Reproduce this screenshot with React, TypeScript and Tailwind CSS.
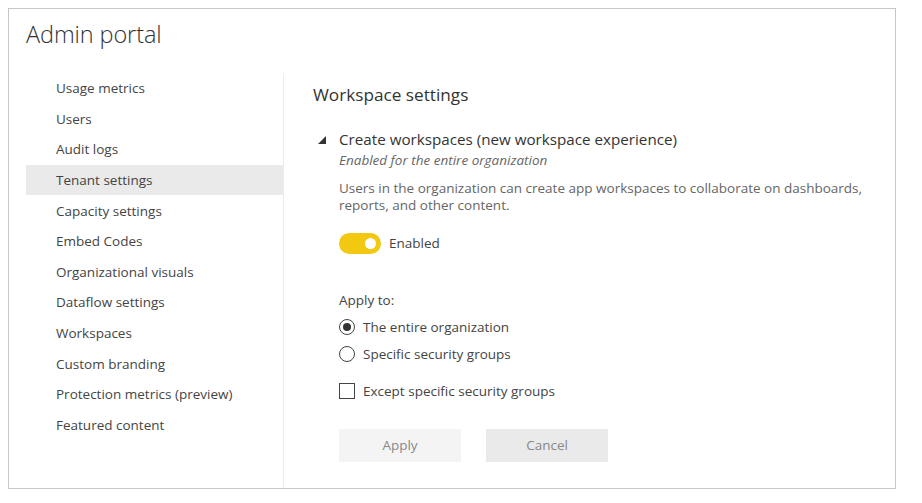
import React from "react";

const nav = [
  "Usage metrics",
  "Users",
  "Audit logs",
  "Tenant settings",
  "Capacity settings",
  "Embed Codes",
  "Organizational visuals",
  "Dataflow settings",
  "Workspaces",
  "Custom branding",
  "Protection metrics (preview)",
  "Featured content",
];

export default function App() {
  return (
    <div
      className="w-[922px] h-[503px] bg-white pt-[8px] pl-[8px]"
      style={{ fontFamily: '"Open Sans", "Noto Sans", sans-serif' }}
    >
      <div className="w-[888px] h-[481px] border border-[#c6c6c6] flex flex-col">
        <div className="h-[64px] pl-[17px] pt-[8px] text-[23.5px] font-light text-[#333] tracking-[-0.1px]">
          Admin portal
        </div>
        <div className="flex flex-1">
          <div className="w-[275px] pl-[17px] border-r border-[#ececec]">
            {nav.map((n) => (
              <div
                key={n}
                className={`h-[30.6px] flex items-center pl-[30px] text-[13.5px] text-[#444] ${
                  n === "Tenant settings" ? "bg-[#eaeaea]" : ""
                }`}
              >
                {n}
              </div>
            ))}
          </div>
          <div className="flex-1 pl-[29px] pt-[10px]">
            <div className="text-[17.2px] text-[#333] h-[24px] leading-[24px]">
              Workspace settings
            </div>
            <div className="mt-[22px] flex">
              <div className="w-[26px] pt-[7px] pl-[5px]">
                <svg width="8" height="8" viewBox="0 0 8 8">
                  <polygon points="8,0 8,8 0,8" fill="#333" />
                </svg>
              </div>
              <div className="flex flex-col">
                <div className="text-[15.2px] text-[#333] leading-[20px]">
                  Create workspaces (new workspace experience)
                </div>
                <div className="mt-[2px] text-[13.5px] italic text-[#666] leading-[18px]">
                  Enabled for the entire organization
                </div>
                <div className="mt-[11px] text-[13.5px] text-[#666] leading-[17px] w-[530px]">
                  Users in the organization can create app workspaces to collaborate on dashboards,
                  reports, and other content.
                </div>
                <div className="mt-[19px] flex items-center">
                  <div className="w-[42px] h-[21px] rounded-full bg-[#f2c811] flex items-center justify-end pr-[5px]">
                    <div className="w-[11px] h-[11px] rounded-full bg-white" />
                  </div>
                  <span className="ml-[8px] text-[13.5px] text-[#444]">Enabled</span>
                </div>
                <div className="mt-[37px] text-[13.5px] text-[#444] leading-[18px]">Apply to:</div>
                <div className="mt-[9px] flex items-center h-[18px]">
                  <div className="w-[16px] h-[16px] rounded-full border border-[#444] flex items-center justify-center">
                    <div className="w-[8px] h-[8px] rounded-full bg-[#333]" />
                  </div>
                  <span className="ml-[8px] text-[13.5px] text-[#444]">The entire organization</span>
                </div>
                <div className="mt-[9px] flex items-center h-[18px]">
                  <div className="w-[16px] h-[16px] rounded-full border border-[#444]" />
                  <span className="ml-[8px] text-[13.5px] text-[#444]">Specific security groups</span>
                </div>
                <div className="mt-[19px] flex items-center h-[18px]">
                  <div className="w-[16px] h-[16px] border border-[#444]" />
                  <span className="ml-[8px] text-[13.5px] text-[#444]">Except specific security groups</span>
                </div>
                <div className="mt-[29px] flex gap-[25px]">
                  <div className="w-[122px] h-[33px] bg-[#f4f4f4] flex items-center justify-center text-[13.5px] text-[#888]">
                    Apply
                  </div>
                  <div className="w-[122px] h-[33px] bg-[#eaeaea] flex items-center justify-center text-[13.5px] text-[#888]">
                    Cancel
                  </div>
                </div>
              </div>
            </div>
          </div>
        </div>
      </div>
    </div>
  );
}
